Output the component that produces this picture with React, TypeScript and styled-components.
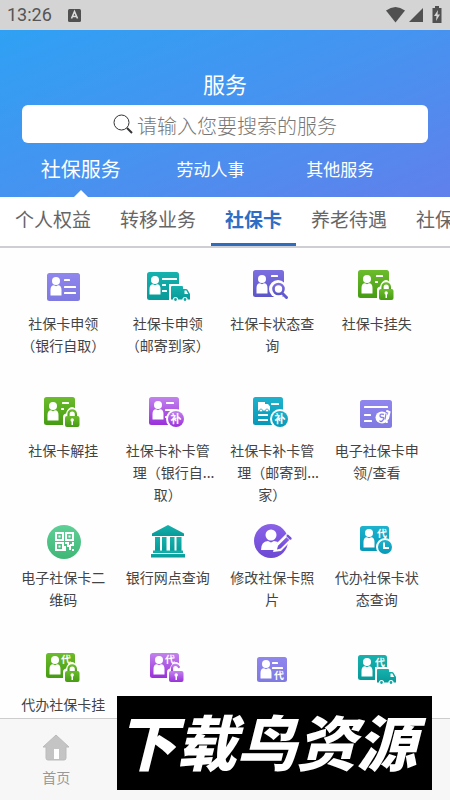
import React from 'react';
import styled, { createGlobalStyle } from 'styled-components';

const GlobalStyle = createGlobalStyle`
  *, *::before, *::after { box-sizing: border-box; }
  body {
    margin: 0;
    background: #fff;
    font-family: "Noto Sans CJK SC", "Noto Sans", sans-serif;
  }
  button, input { font: inherit; }
`;

const Screen = styled.div`
  display: flex;
  flex-direction: column;
  height: 100vh;
  overflow: hidden;
  background: #fefefe;
`;

const StatusBar = styled.div`
  flex: none;
  display: flex;
  align-items: center;
  justify-content: space-between;
  height: 30px;
  padding: 0 8px 0 7px;
  background: #d4d4d4;
  color: #555;
`;

const StatusGroup = styled.div`
  display: flex;
  align-items: center;
  gap: 16px;
`;

const Clock = styled.span`
  font: 400 18px/32px Roboto, sans-serif;
`;

const Header = styled.header`
  flex: none;
  padding-top: 38px;
  background: linear-gradient(158deg, #2fa1f4 0%, #4693f0 50%, #6080eb 100%);
  color: #fff;
`;

const Title = styled.h1`
  margin: 0;
  font-size: 22px;
  font-weight: 400;
  line-height: 30px;
  text-align: center;
`;

const SearchBox = styled.label`
  display: flex;
  align-items: center;
  justify-content: center;
  gap: 4px;
  height: 38px;
  margin: 7px 22px 0;
  border-radius: 6px;
  background: #fff;
`;

const SearchInput = styled.input`
  width: 200px;
  height: 38px;
  padding: 2px 0 0;
  border: 0;
  outline: 0;
  background: transparent;
  color: #444;
  font-size: 20px;
  font-weight: 300;
  &::placeholder { color: #777; opacity: 1; }
`;

const MainTabs = styled.nav`
  display: grid;
  grid-template-columns: repeat(3, 1fr);
  height: 54px;
  padding: 0 45px 0 16px;
`;

const MainTab = styled.button<{ $active?: boolean }>`
  position: relative;
  padding: 0 0 4px;
  border: 0;
  background: transparent;
  color: #fff;
  font-size: ${(p) => (p.$active ? 20 : 17)}px;
  white-space: nowrap;
  &::after {
    content: "";
    display: ${(p) => (p.$active ? 'block' : 'none')};
    position: absolute;
    bottom: 0;
    left: calc(50% - 7px);
    border: 7px solid transparent;
    border-top-width: 0;
    border-bottom-color: #fff;
  }
`;

const SubTabs = styled.nav`
  flex: none;
  display: flex;
  gap: 1px;
  height: 51px;
  padding-left: 1px;
  overflow: hidden;
  border-bottom: 2px solid #cfcfd3;
  background: #fff;
`;

const SubTab = styled.button<{ $active?: boolean }>`
  flex: none;
  height: 49px;
  padding: 0 14px 3px;
  border: 0;
  border-bottom: 3px solid ${(p) => (p.$active ? '#2f6cbd' : 'transparent')};
  background: transparent;
  color: ${(p) => (p.$active ? '#2f6dc4' : '#666')};
  font-size: 19px;
  font-weight: ${(p) => (p.$active ? 700 : 400)};
  line-height: 28px;
`;

const Content = styled.main`
  flex: 1;
  min-height: 0;
  overflow: hidden;
  padding: 19px 21px 0 11px;
`;

const ServiceGrid = styled.div`
  display: grid;
  grid-template-columns: repeat(4, 1fr);
  grid-auto-rows: minmax(127px, auto);
`;

const ServiceButton = styled.button`
  display: flex;
  flex-direction: column;
  align-items: center;
  gap: 5px;
  padding: 0;
  border: 0;
  background: transparent;
  color: #444;
`;

const Label = styled.span`
  display: block;
  font-size: 14px;
  line-height: 22px;
  text-align: center;
`;

const Line = styled.span`
  display: block;
  white-space: nowrap;
`;

const Ellipsis = styled.span`
  display: inline-block;
  width: 0;
`;

const BottomNav = styled.nav`
  flex: none;
  display: grid;
  grid-template-columns: repeat(4, 1fr);
  height: 82px;
  border-top: 1px solid #cdcdcd;
  background: #f7f7f7;
`;

const NavButton = styled.button`
  display: flex;
  flex-direction: column;
  align-items: center;
  gap: 5px;
  padding: 15px 0 0;
  border: 0;
  background: transparent;
  color: #999;
  font-size: 14px;
  line-height: 22px;
`;

const Watermark = styled.div`
  position: fixed;
  right: 18px;
  bottom: 10px;
  display: flex;
  align-items: center;
  justify-content: center;
  width: 70%;
  height: 94px;
  padding: 0 16px 6px 0;
  background: #000;
  color: #fff;
  font-size: 60px;
  font-style: italic;
  font-weight: 900;
  line-height: 88px;
  white-space: nowrap;
`;

type Box = { x: number; y: number; w?: number; h?: number };

const Gradient = ({ id, from, to }: { id: string; from: string; to: string }) => (
  <linearGradient id={id} x1="0" y1="0" x2="0" y2="1">
    <stop offset="0" stopColor={from} />
    <stop offset="1" stopColor={to} />
  </linearGradient>
);

const palette = {
  indigo: ['#8f86ee', '#7f79e2'],
  teal: ['#16b2ae', '#079a98'],
  violet: ['#7c6fe0', '#5c55c8'],
  green: ['#6cbc2c', '#459b12'],
  purple: ['#c283ee', '#9a2fda'],
  cyan: ['#1db2cd', '#0798b8'],
  mint: ['#5fd097', '#3fb676'],
  grape: ['#8a62e8', '#6c48d4'],
} as const;
type Tone = keyof typeof palette;

const Card = ({ x, y, w = 31, h = 28, fill }: Box & { fill: string }) => (
  <rect x={x} y={y} width={w} height={h} rx="2.5" fill={fill} />
);

const Person = ({ x, y }: Box) => (
  <g fill="#fff">
    <circle cx={x + 5} cy={y + 4} r="4" />
    <path d={`M${x - 0.5} ${y + 18.5}v-5.500q0-4.500 3.500-4.700l2 1 2-1q3.500.2 3.500 4.700v5.500z`} />
  </g>
);

const Bar = ({ x, y, w = 10 }: Box) => <rect x={x} y={y} width={w} height="2" rx=".6" fill="#fff" />;

const Glyph = ({ x, y, children, size = 10 }: Box & { children: string; size?: number }) => (
  <text x={x} y={y} fontSize={size} fontWeight="700" fill="#fff" textAnchor="middle">
    {children}
  </text>
);

const Lock = ({ x, y, fill, open }: Box & { fill: string; open?: boolean }) => (
  <g>
    <path
      d={`M${x - 2} ${y + 20}V${y + 7}q0-3 3-3.500Q${x + 3} ${y - 3} ${x + 7} ${y - 3}t6 6.500q4 .5 4 4V${y + 20}z`}
      fill="#fff"
    />
    <path
      d={open ? `M${x + 3} ${y + 7}v-3.500a3.600 3.600 0 0 1 6.900-1.500` : `M${x + 3.5} ${y + 8}v-4a3.700 3.700 0 0 1 7.400 0v4`}
      fill="none"
      stroke={fill}
      strokeWidth="2.200"
      strokeLinecap="round"
    />
    <rect x={x} y={y + 6} width="14.500" height="11" rx="2" fill={fill} />
    <circle cx={x + 7.2} cy={y + 10} r="1.700" fill="#fff" />
    <path d={`M${x + 6.5} ${y + 10}h1.500v5h-1.500z`} fill="#fff" />
  </g>
);

const Truck = ({ x, y, fill }: Box & { fill: string }) => (
  <g>
    <path d={`M${x - 2} ${y - 2}h21v19h-21z`} fill="#fff" />
    <path
      d={`M${x} ${y + 1}q0-1 1-1h10q1 0 1 1v2h3q1 0 1.500.8l2.500 4.200v5.500h-19z`}
      fill={fill}
    />
    <path d={`M${x + 13.5} ${y + 4.5}h1.800l1.900 3.500h-3.700z`} fill="#fff" />
    {[4.5, 14].map((dx) => (
      <circle key={dx} cx={x + dx} cy={y + 13.5} r="2" fill={fill} stroke="#fff" strokeWidth="1.200" />
    ))}
  </g>
);

const Badge = ({ x, y, fill, glyph }: Box & { fill: string; glyph: string }) => (
  <g>
    <circle cx={x} cy={y} r="10" fill="#fff" />
    <circle cx={x} cy={y} r="8" fill={fill} />
    <Glyph x={x} y={y + 4} size={11}>{glyph}</Glyph>
  </g>
);

const art: Record<string, (f: string) => React.ReactNode> = {
  apply: (f) => (
    <>
      <Card x={8} y={6} w={33} fill={f} />
      <Person x={12} y={10} />
      <Bar x={25} y={12} w={6} /><Bar x={25} y={19} w={12} /><Bar x={25} y={25} w={12} />
    </>
  ),
  applyMail: (f) => (
    <>
      <Card x={3} y={5} w={32} fill={f} />
      <Person x={6} y={9} />
      <Bar x={18} y={11} w={15} /><Bar x={18} y={17} w={4} /><Bar x={18} y={23} w={5} />
      <Truck x={27} y={19} fill={f} />
    </>
  ),
  query: (f) => (
    <>
      <Card x={5} y={3} h={27} fill={f} />
      <Person x={9} y={8} />
      <Bar x={23} y={8} w={7} />
      <circle cx="30" cy="22" r="9" fill="#fff" />
      <circle cx="30.500" cy="22" r="5" fill="none" stroke={f} strokeWidth="2.600" />
      <path d="M34.500 26.500l4 4" stroke="#625ace" strokeWidth="3" strokeLinecap="round" />
    </>
  ),
  lock: (f) => (
    <>
      <Card x={5} y={3} fill={f} />
      <Person x={9} y={8} />
      <Bar x={23} y={8} w={7} /><Bar x={22} y={14} w={3} />
      <Lock x={26} y={16} fill={f} />
    </>
  ),
  reissue: (f) => (
    <>
      <Card x={5} y={3} w={30} fill={f} />
      <Person x={9} y={7} />
      <Bar x={22} y={8} w={8} /><Bar x={21} y={15} w={10} /><Bar x={21} y={22} w={3} />
      <Badge x={32} y={25} fill={f} glyph="补" />
    </>
  ),
  reissueMail: (f) => (
    <>
      <Card x={5} y={3} w={30} fill={f} />
      <path d="M10 8h7v2h3l2 2.500v4H10z" fill="#fff" />
      <circle cx="13" cy="16.500" r="1.500" fill="#fff" stroke={f} strokeWidth=".8" />
      <circle cx="19" cy="16.500" r="1.500" fill="#fff" stroke={f} strokeWidth=".8" />
      <Bar x={23} y={9} w={8} /><Bar x={10} y={20} w={10} /><Bar x={10} y={25} w={10} />
      <Badge x={32} y={25} fill={f} glyph="补" />
    </>
  ),
  eCard: (f) => (
    <>
      <Card x={7} y={6} w={32} fill={f} />
      <Bar x={11} y={12} w={24} /><Bar x={11} y={20} w={7} /><Bar x={11} y={26} w={8} />
      <ellipse cx="29" cy="23.500" rx="6.500" ry="6" fill="#fff" />
      <path d="M31 20.500q-4-1-4 1t2.500 2 .5 2.600-3.500.4" fill="none" stroke={f} strokeWidth="1.300" />
      <path d="M34 17l2.500 1-1.500 6.500M33.500 28h.5" fill="none" stroke="#fff" strokeWidth="2" strokeLinecap="round" />
      <path d="M33 19.500l-1 6" stroke={f} strokeWidth="1.200" />
    </>
  ),
  qr: (f) => (
    <>
      <circle cx="25" cy="21" r="17" fill={f} />
      <g fill="none" stroke="#fff" strokeWidth="2">
        <rect x="17" y="12" width="7" height="7" /><rect x="27" y="12" width="7" height="7" />
        <rect x="17" y="22" width="7" height="7" />
        <path d="M26 22h3v3h2v4M34 21v3h-3M26 25v5M33 29h2" />
      </g>
      <path d="M19.500 14.500h2v2h-2zM29.500 14.500h2v2h-2zM19.500 24.500h2v2h-2z" fill="#fff" />
    </>
  ),
  bank: (f) => (
    <g fill={f}>
      <path d="M24 4l16 8.500v2.500H8v-2.500z" />
      <path d="M11 16h5V30h-5zM18 16h4.500V30H18zM26 16h4.500V30H26zM32.500 16h5V30h-5z" />
      <path d="M9 29.500h30v2.500H9zM7 33h34v3.500H7z" />
    </g>
  ),
  photo: (f) => (
    <>
      <circle cx="23" cy="20" r="17" fill={f} />
      <circle cx="23" cy="14" r="5.500" fill="#fff" />
      <path d="M13 29q0-8.500 7-9l3 1.500 3-1.500 4 1-3 4v4z" fill="#fff" />
      <path d="M25 31l2-7L38 13l7 5-12 12z" fill="#fff" />
      <path d="M29 28.500l1-3.700 8.500-8.600 2.800 2.700-8.600 8.600z" fill={f} />
      <path d="M39.700 14.800l2.700 2.700" stroke="#7450dc" strokeWidth="2.500" strokeLinecap="round" />
    </>
  ),
  agentStatus: (f) => (
    <>
      <Card x={7} y={5} w={29} h={25} fill={f} />
      <Person x={11} y={8} />
      <Glyph x={29} y={16}>代</Glyph>
      <circle cx="32" cy="26" r="9" fill="#fff" />
      <circle cx="32" cy="26" r="7" fill={f} />
      <path d="M31 21.500v5.500h5" fill="none" stroke="#fff" strokeWidth="2" />
    </>
  ),
  agentLock: (f) => (
    <>
      <Card x={7} y={5} w={29} h={25} fill={f} />
      <Person x={11} y={8} />
      <Glyph x={27} y={15}>代</Glyph>
      <Lock x={26} y={17} fill={f} />
    </>
  ),
  agentUnlock: (f) => (
    <>
      <Card x={6} y={5} w={29} h={25} fill={f} />
      <Person x={10} y={8} />
      <Glyph x={26} y={15}>代</Glyph>
      <Lock x={25} y={17} fill={f} open />
    </>
  ),
  agentApply: (f) => (
    <>
      <Card x={9} y={9} w={30} h={25} fill={f} />
      <Person x={13} y={12} />
      <Bar x={24} y={14} w={6} /><Bar x={24} y={19} w={11} />
      <Glyph x={31} y={31}>代</Glyph>
    </>
  ),
  agentMail: (f) => (
    <>
      <Card x={5} y={7} w={29} h={25} fill={f} />
      <Person x={9} y={10} />
      <Glyph x={27} y={18}>代</Glyph>
      <Truck x={24} y={21} fill={f} />
    </>
  ),
};

const ServiceIcon = ({ kind, tone }: { kind: string; tone: Tone }) => {
  const id = `${kind}-${tone}`;
  return (
    <svg width="48" height="40" viewBox="0 0 48 40" aria-hidden="true">
      <defs><Gradient id={id} from={palette[tone][0]} to={palette[tone][1]} /></defs>
      {art[kind](`url(#${id})`)}
    </svg>
  );
};

type Service = { kind: string; tone: Tone; lines: string[]; cut?: number; name?: string };

const services: Service[] = [
  { kind: 'apply', tone: 'indigo', lines: ['社保卡申领', '（银行自取）'] },
  { kind: 'applyMail', tone: 'teal', lines: ['社保卡申领', '（邮寄到家）'] },
  { kind: 'query', tone: 'violet', lines: ['社保卡状态查', '询'] },
  { kind: 'lock', tone: 'green', lines: ['社保卡挂失'] },
  { kind: 'lock', tone: 'green', lines: ['社保卡解挂'] },
  { kind: 'reissue', tone: 'purple', lines: ['社保卡补卡管', '理（银行自', '取）'], cut: 1 },
  { kind: 'reissueMail', tone: 'cyan', lines: ['社保卡补卡管', '理（邮寄到', '家）'], cut: 1 },
  { kind: 'eCard', tone: 'indigo', lines: ['电子社保卡申', '领/查看'] },
  { kind: 'qr', tone: 'mint', lines: ['电子社保卡二', '维码'] },
  { kind: 'bank', tone: 'teal', lines: ['银行网点查询'] },
  { kind: 'photo', tone: 'grape', lines: ['修改社保卡照', '片'] },
  { kind: 'agentStatus', tone: 'cyan', lines: ['代办社保卡状', '态查询'] },
  { kind: 'agentLock', tone: 'green', lines: ['代办社保卡挂'] },
  { kind: 'agentUnlock', tone: 'purple', lines: [], name: '代办社保卡解挂' },
  { kind: 'agentApply', tone: 'indigo', lines: [], name: '代办社保卡申领' },
  { kind: 'agentMail', tone: 'teal', lines: [], name: '代办社保卡邮寄' },
];

const categories = ['个人权益', '转移业务', '社保卡', '养老待遇', '社保'];

export default function App() {
  return (
    <Screen>
      <GlobalStyle />
      <StatusBar>
        <StatusGroup>
          <Clock>13:26</Clock>
          <svg width="13" height="13" viewBox="0 0 13 13" aria-hidden="true">
            <rect width="13" height="13" rx="1.500" fill="#505050" />
            <path d="M3.500 9.500l3-7 3 7M4.500 7.500h4" fill="none" stroke="#ddd" strokeWidth="1.600" />
          </svg>
        </StatusGroup>
        <svg width="56" height="18" viewBox="0 0 56 18" fill="#505050" aria-hidden="true">
          <path d="M0 4.500Q9.500-2.500 19 4.500L9.500 16.500z" />
          <path d="M37 2v14H23z" />
          <path d="M49 0h4v2h2.500v15h-9V2H49z" />
          <path d="M52 4l-4 6h2.500l-.5 5 4-6.500h-2.500z" fill="#d4d4d4" />
        </svg>
      </StatusBar>

      <Header>
        <Title>服务</Title>
        <SearchBox>
          <svg width="20" height="20" viewBox="0 0 20 20" fill="none" stroke="#333" aria-hidden="true">
            <circle cx="8.500" cy="8.500" r="7.500" strokeWidth="1" />
            <path d="M14 14l5 5" strokeWidth="2" />
          </svg>
          <SearchInput type="text" placeholder="请输入您要搜索的服务" aria-label="搜索服务" />
        </SearchBox>
        <MainTabs>
          <MainTab $active>社保服务</MainTab>
          <MainTab>劳动人事</MainTab>
          <MainTab>其他服务</MainTab>
        </MainTabs>
      </Header>

      <SubTabs>
        {categories.map((name) => (
          <SubTab key={name} $active={name === '社保卡'}>{name}</SubTab>
        ))}
      </SubTabs>

      <Content>
        <ServiceGrid>
          {services.map((s, i) => (
            <ServiceButton key={i} aria-label={s.name}>
              <ServiceIcon kind={s.kind} tone={s.tone} />
              <Label>
                {s.lines.map((line, n) => (
                  <Line key={n}>
                    {line}
                    {s.cut === n && <Ellipsis>...</Ellipsis>}
                  </Line>
                ))}
              </Label>
            </ServiceButton>
          ))}
        </ServiceGrid>
      </Content>

      <BottomNav>
        <NavButton>
          <svg width="28" height="27" viewBox="0 0 28 27" aria-hidden="true">
            <path d="M14 1L1 13h3v11q0 2 2 2h16q2 0 2-2V13h3z" fill="#c4c4c4" stroke="#bbb" />
            <path d="M12 15h5v10h-5z" fill="#fff" />
          </svg>
          首页
        </NavButton>
      </BottomNav>

      <Watermark>下载鸟资源</Watermark>
    </Screen>
  );
}
